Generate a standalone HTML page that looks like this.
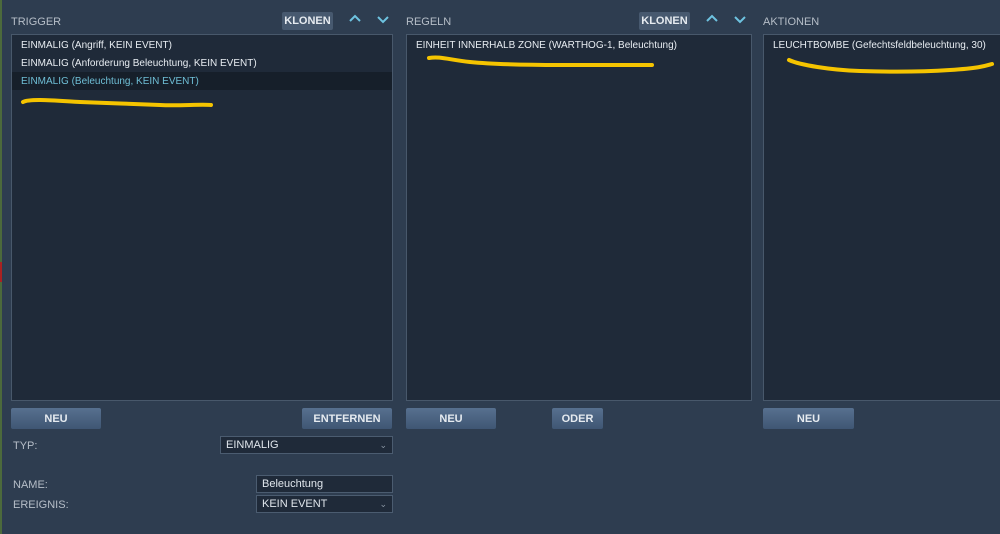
<html><head><style>
body{margin:0;width:1000px;height:534px;background:#2e3d50;font-family:"Liberation Sans","DejaVu Sans",sans-serif;position:relative;overflow:hidden;color:#dfe5ec}
.a{position:absolute}
.box{position:absolute;background:#1f2a39;border:1px solid #48586b;box-sizing:border-box}
.lbl{position:absolute;font-size:11px;color:#b6bec8}
.it{position:absolute;font-size:10px;color:#e8edf2;left:9px}
.btn{position:absolute;height:21px;background:linear-gradient(#57708f,#3f5673);border-radius:2px;font-size:11px;font-weight:bold;color:#e6ebf0;text-align:center;line-height:22px}
.kl{position:absolute;height:18px;background:#47596f;border-radius:2px;font-size:11px;font-weight:bold;color:#e6ebf0;text-align:center;line-height:19px;width:51px}
.in{position:absolute;background:#1f2a39;border:1px solid #4b5c70;box-sizing:border-box;font-size:11px;color:#e0e6ec;padding-left:5px;line-height:17px}
.y{stroke:#f5c400;stroke-width:4;fill:none;stroke-linecap:round}
</style></head><body>
<div class="a" style="left:0;top:0;width:2px;height:534px;background:#4c6a3c"></div>
<div class="a" style="left:0;top:262px;width:2px;height:20px;background:#a22"></div>
<div class="lbl" style="left:11px;top:16px">TRIGGER</div>
<div class="kl" style="left:282px;top:12px">KLONEN</div>
<svg class="a" style="left:349px;top:14px" width="12" height="10"><path d="M1 7L6 2L11 7" stroke="#6ec3e0" stroke-width="2" fill="none"/></svg>
<svg class="a" style="left:377px;top:14px" width="12" height="10"><path d="M1 3L6 8L11 3" stroke="#6ec3e0" stroke-width="2" fill="none"/></svg>
<div class="lbl" style="left:406px;top:16px">REGELN</div>
<div class="kl" style="left:639px;top:12px">KLONEN</div>
<svg class="a" style="left:706px;top:14px" width="12" height="10"><path d="M1 7L6 2L11 7" stroke="#6ec3e0" stroke-width="2" fill="none"/></svg>
<svg class="a" style="left:734px;top:14px" width="12" height="10"><path d="M1 3L6 8L11 3" stroke="#6ec3e0" stroke-width="2" fill="none"/></svg>
<div class="lbl" style="left:763px;top:16px">AKTIONEN</div>

<div class="box" style="left:11px;top:34px;width:382px;height:367px">
<div class="it" style="top:5px">EINMALIG (Angriff, KEIN EVENT)</div>
<div class="it" style="top:23px">EINMALIG (Anforderung Beleuchtung, KEIN EVENT)</div>
<div class="a" style="left:0;top:37px;width:380px;height:18px;background:#161f2a"></div>
<div class="it" style="top:41px;color:#6fbfd6">EINMALIG (Beleuchtung, KEIN EVENT)</div>
</div>
<div class="box" style="left:406px;top:34px;width:346px;height:367px">
<div class="it" style="top:5px">EINHEIT INNERHALB ZONE (WARTHOG-1, Beleuchtung)</div>
</div>
<div class="box" style="left:763px;top:34px;width:245px;height:367px">
<div class="it" style="top:5px">LEUCHTBOMBE (Gefechtsfeldbeleuchtung, 30)</div>
</div>
<svg class="a" style="left:0;top:0" width="1000" height="534">
<path class="y" d="M23 102C30 98 60 101 80 102S140 104 160 105S200 104 211 105"/>
<path class="y" d="M429 58C440 56 450 60 470 62S520 65 560 65S630 65 652 65"/>
<path class="y" d="M789 60C800 65 830 70 860 71S920 72 950 70S985 66 992 64"/>
</svg>
<div class="btn" style="left:11px;top:408px;width:90px">NEU</div>
<div class="btn" style="left:302px;top:408px;width:90px">ENTFERNEN</div>
<div class="btn" style="left:406px;top:408px;width:90px">NEU</div>
<div class="btn" style="left:552px;top:408px;width:51px">ODER</div>
<div class="btn" style="left:763px;top:408px;width:91px">NEU</div>
<div class="lbl" style="left:13px;top:440px">TYP:</div>
<div class="in" style="left:220px;top:436px;width:173px;height:18px">EINMALIG<span style="position:absolute;right:5px;color:#8a96a4;font-size:9px">&#8964;</span></div>
<div class="lbl" style="left:13px;top:479px">NAME:</div>
<div class="in" style="left:256px;top:475px;width:137px;height:18px">Beleuchtung</div>
<div class="lbl" style="left:13px;top:499px">EREIGNIS:</div>
<div class="in" style="left:256px;top:495px;width:137px;height:18px">KEIN EVENT<span style="position:absolute;right:5px;color:#8a96a4;font-size:9px">&#8964;</span></div>
</body></html>
